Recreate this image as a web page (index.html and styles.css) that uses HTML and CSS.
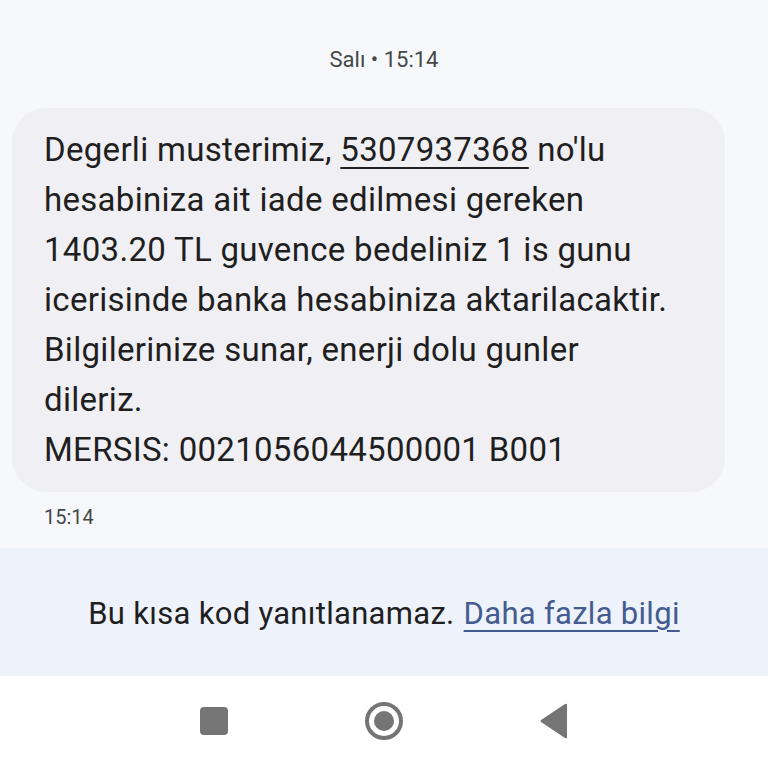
FILE: index.html
```html
<!DOCTYPE html>
<html lang="tr">
<head>
    <meta charset="UTF-8">
    <meta name="viewport" content="width=device-width, initial-scale=1.0">
    <title>Mesaj</title>
    <link rel="stylesheet" href="styles.css">
</head>
<body>
    <div id="thread">
        <div class="date-header">Salı • 15:14</div>
        <div class="bubble">
            Degerli musterimiz, <span class="num">5307937368</span> no'lu<br>
            hesabiniza ait iade edilmesi gereken<br>
            1403.20 TL guvence bedeliniz 1 is gunu<br>
            icerisinde banka hesabiniza aktarilacaktir.<br>
            Bilgilerinize sunar, enerji dolu gunler<br>
            dileriz.<br>
            MERSIS: 0021056044500001 B001
        </div>
        <div class="msg-time">15:14</div>
    </div>
    <div id="no-reply">
        Bu kısa kod yanıtlanamaz. <a href="#" class="more">Daha fazla bilgi</a>
    </div>
    <div id="nav-bar">
        <svg class="nav-icon" width="40" height="40" viewBox="0 0 40 40">
            <rect x="6" y="6" width="28" height="28" rx="4" fill="#757575"/>
        </svg>
        <svg class="nav-icon" width="40" height="40" viewBox="0 0 40 40">
            <circle cx="20" cy="20" r="17" fill="none" stroke="#757575" stroke-width="4"/>
            <circle cx="20" cy="20" r="10" fill="#757575"/>
        </svg>
        <svg class="nav-icon" width="40" height="40" viewBox="0 0 40 40">
            <path d="M33 4 L33 36 Q33 38 31 37 L7 21 Q6 20 7 19 L31 3 Q33 2 33 4 Z" fill="#757575"/>
        </svg>
    </div>
</body>
</html>
```

FILE: styles.css
```css
body {
    font-family: Roboto, "Noto Sans", sans-serif;
    background: #f7f8fc;
    margin: 0;
    height: 768px;
    display: flex;
    flex-direction: column;
    color: #1f1f1f;
}
#thread {
    padding: 0 43px 0 12px;
    flex: 1;
}
.date-header {
    text-align: center;
    font-size: 22px;
    line-height: 26px;
    color: #444746;
    padding: 47px 0 0 31px;
    height: 108px;
    box-sizing: border-box;
}
.bubble {
    background: #f0eff4;
    border-radius: 34px;
    padding: 17px 32px;
    font-size: 33px;
    letter-spacing: 0.3px;
    line-height: 50px;
    white-space: nowrap;
}
.num {
    text-decoration: underline;
    text-underline-offset: 6px;
    text-decoration-thickness: 2px;
}
.msg-time {
    font-size: 20px;
    line-height: 24px;
    color: #444746;
    padding: 13px 0 0 32px;
}
#no-reply {
    background: #eef2fb;
    height: 128px;
    display: flex;
    align-items: center;
    justify-content: center;
    font-size: 31px;
    letter-spacing: 0.3px;
    padding-top: 2px;
    box-sizing: border-box;
}
#no-reply .more {
    color: #445c8f;
    margin-left: 9px;
    text-decoration-thickness: 2px;
    text-underline-offset: 6px;
}
#nav-bar {
    background: #ffffff;
    height: 92px;
    display: flex;
    justify-content: center;
    align-items: center;
    gap: 130px;
    padding-bottom: 2px;
    box-sizing: border-box;
}
```
